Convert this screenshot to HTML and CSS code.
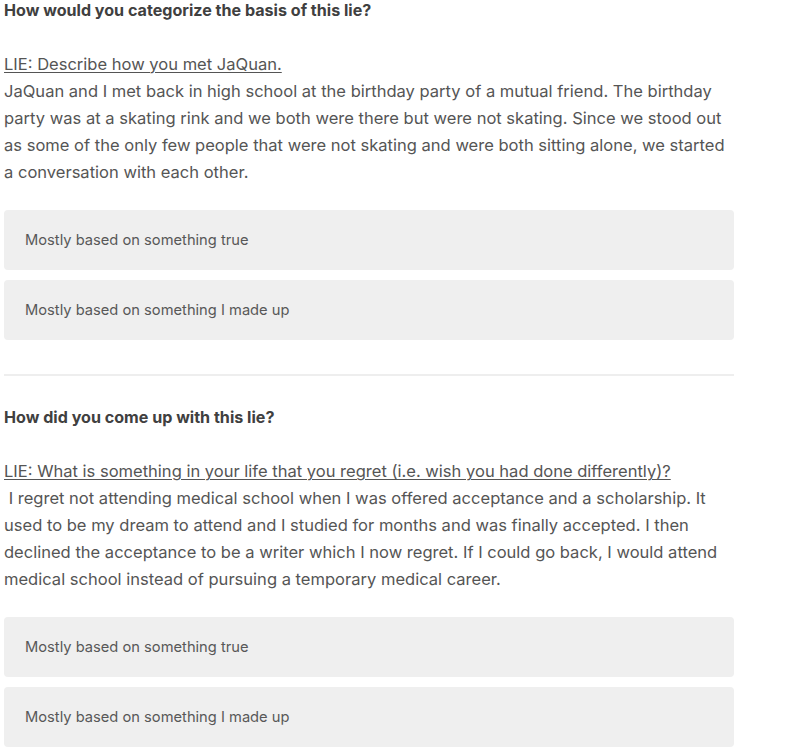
FILE: index.html
```html
<!DOCTYPE html>
<html>
<head>
<meta charset="utf-8">
<link rel="stylesheet" href="styles.css">
</head>
<body>
<div class="page">
  <section class="question">
    <div class="qtext">
      <strong class="qtitle">How would you categorize the basis of this lie?</strong><br><br>
      <u class="lie">LIE: Describe how you met JaQuan.</u><br>
      JaQuan and I met back in high school at the birthday party of a mutual friend. The birthday party was at a skating rink and we both were there but were not skating. Since we stood out as some of the only few people that were not skating and were both sitting alone, we started a conversation with each other.
    </div>
    <div class="choices">
      <div class="choice">Mostly based on something true</div>
      <div class="choice">Mostly based on something I made up</div>
    </div>
  </section>
  <hr class="sep">
  <section class="question">
    <div class="qtext">
      <strong class="qtitle">How did you come up with this lie?</strong><br><br>
      <u class="lie">LIE: What is something in your life that you regret (i.e. wish you had done differently)?</u><br>
      &nbsp;I regret not attending medical school when I was offered acceptance and a scholarship. It used to be my dream to attend and I studied for months and was finally accepted. I then declined the acceptance to be a writer which I now regret. If I could go back, I would attend medical school instead of pursuing a temporary medical career.
    </div>
    <div class="choices">
      <div class="choice">Mostly based on something true</div>
      <div class="choice">Mostly based on something I made up</div>
    </div>
  </section>
</div>
</body>
</html>
```
FILE: styles.css
```css
html, body {
  margin: 0;
  padding: 0;
  background: #ffffff;
}
.page {
  width: 730px;
  margin: -3px 0 0 4px;
  font-family: "Inter", "Liberation Sans", sans-serif;
}
.qtext {
  font-size: 16.55px;
  line-height: 27px;
  color: #555555;
  padding-right: 4px;
}
.qtitle {
  font-weight: 700;
  font-size: 16.1px;
  color: #404040;
}
.lie {
  color: #555555;
  text-decoration-thickness: 1px;
  text-underline-offset: 2px;
}
.choices {
  display: flex;
  flex-direction: column;
  gap: 10px;
  margin-top: 24px;
}
.choice {
  height: 60px;
  display: flex;
  align-items: center;
  padding-left: 21px;
  background: #efefef;
  border-radius: 4px;
  font-size: 14.7px;
  color: #585858;
}
.sep {
  border: 0;
  height: 2px;
  background: #eeeeee;
  margin: 34px 0 28px;
}
```
